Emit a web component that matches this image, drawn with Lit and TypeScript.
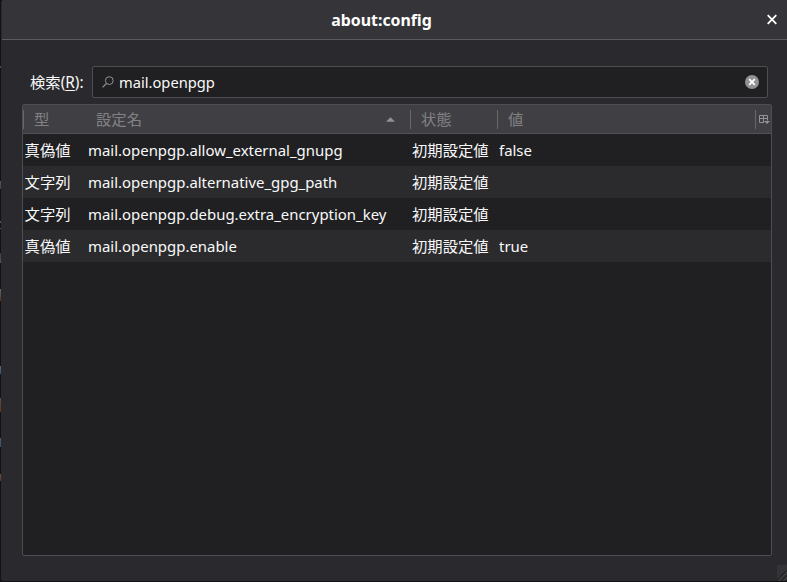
import { LitElement, html, css } from "lit";
import { customElement } from "lit/decorators.js";

interface Pref {
  type: string;
  name: string;
  status: string;
  value: string;
}

const PREFS: Pref[] = [
  { type: "真偽値", name: "mail.openpgp.allow_external_gnupg", status: "初期設定値", value: "false" },
  { type: "文字列", name: "mail.openpgp.alternative_gpg_path", status: "初期設定値", value: "" },
  { type: "文字列", name: "mail.openpgp.debug.extra_encryption_key", status: "初期設定値", value: "" },
  { type: "真偽値", name: "mail.openpgp.enable", status: "初期設定値", value: "true" },
];

@customElement("pref-tree")
export class PrefTree extends LitElement {
  static styles = css`
    :host {
      display: flex;
      flex-direction: column;
      box-sizing: border-box;
      border: 1px solid #4e4e51;
      border-radius: 2px;
      background: #202022;
    }
    .head, .row {
      display: grid;
      grid-template-columns: 65px 322px 87px 1fr 16px;
    }
    .head {
      height: 28px;
      align-items: center;
      background: #404044;
      border-bottom: 1px solid #525255;
      color: #828285;
    }
    .col {
      display: flex;
      align-items: center;
      box-sizing: border-box;
      height: 19px;
      padding-left: 10px;
      line-height: 19px;
      border-left: 1px solid #68686b;
    }
    .name-col {
      border-left: 0;
      padding-left: 8px;
      justify-content: space-between;
      padding-right: 15px;
    }
    .picker { padding-left: 3px; }
    .row {
      height: 32px;
      line-height: 32px;
      color: #f9f9fa;
      white-space: nowrap;
    }
    .row:nth-child(odd) { background: #2b2b2d; }
    .cell { padding-left: 2px; }
    .type { padding-left: 1.6px; }
    .name { padding-left: 0; }
    .latin { display: block; margin-top: -0.5px; font-size: 14.93px; }
    svg { display: block; flex: none; }
  `;

  render() {
    return html`
      <div class="head">
        <div class="col">型</div>
        <div class="col name-col">
          設定名
          <svg width="9" height="5" viewBox="0 0 9 5"><path d="M0 4.8 4.5 .3 9 4.8z" fill="#929295" /></svg>
        </div>
        <div class="col">状態</div>
        <div class="col">値</div>
        <div class="col picker">
          <svg width="11" height="11" viewBox="0 0 11 11">
            <path d="M5 8.5H.5v-7h8v5M0 4.5h9M4.5 1v7.5" fill="none" stroke="#929295" />
            <path d="M5 7h6L8 10z" fill="#929295" />
          </svg>
        </div>
      </div>
      ${PREFS.map(
        (p) => html`
          <div class="row">
            <div class="cell type">${p.type}</div>
            <div class="cell name"><span class="latin">${p.name}</span></div>
            <div class="cell">${p.status}</div>
            <div class="cell"><span class="latin">${p.value}</span></div>
          </div>
        `
      )}
    `;
  }
}

@customElement("app-root")
export class AppRoot extends LitElement {
  static styles = css`
    :host {
      display: flex;
      flex-direction: column;
      box-sizing: border-box;
      width: 787px;
      height: 582px;
      padding: 0 0 1px 1px;
      background:
        linear-gradient(#34566b, #5a4a3a) 0 66px / 1px 2px no-repeat,
        linear-gradient(#55555a, #3b4a58) 0 181px / 1px 8px no-repeat,
        linear-gradient(#55555a, #55555a) 0 221px / 1px 2px no-repeat,
        linear-gradient(#55555a, #55555a) 0 228px / 1px 1px no-repeat,
        linear-gradient(#4a3a2c, #55555a) 0 253px / 1px 10px no-repeat,
        linear-gradient(#66666a, #5a3218) 0 289px / 1px 12px no-repeat,
        linear-gradient(#66666a, #2c567c) 0 366px / 1px 8px no-repeat,
        linear-gradient(#5c4c44, #6a3614) 0 398px / 1px 14px no-repeat,
        linear-gradient(#55555a, #2c567c) 0 438px / 1px 9px no-repeat,
        linear-gradient(#55555a, #6a3614) 0 474px / 1px 7px no-repeat,
        #121215;
      color: #f9f9fa;
      font: 15.33px "Noto Sans", "Noto Sans CJK JP", sans-serif;
      overflow: hidden;
    }
    .window {
      position: relative;
      flex: 1;
      display: flex;
      flex-direction: column;
      background: #2a2a2e;
      border-radius: 3px 0 2px 2px;
      overflow: hidden;
    }
    .titlebar {
      display: grid;
      grid-template-columns: 1fr auto 1fr;
      align-items: center;
      height: 39px;
      padding: 0 10px 0 1px;
      margin-left: 1px;
      background: #353539;
      border-bottom: 1px solid #5b5b5e;
    }
    .title {
      grid-column: 2;
      margin-left: -17px;
      font-size: 15.9px;
      font-weight: 700;
      color: #fff;
    }
    .close { justify-self: end; }
    .body {
      flex: 1;
      display: flex;
      flex-direction: column;
      gap: 6px;
      padding: 26px 15px 25px 21px;
    }
    .search {
      display: flex;
      align-items: center;
      height: 32px;
      margin: 0 4px 0 8px;
    }
    .label { width: 62px; line-height: 20px; padding-bottom: 1px; white-space: nowrap; }
    .key { text-decoration: underline; text-underline-offset: 2px; }
    .box {
      flex: 1;
      display: flex;
      align-items: center;
      box-sizing: border-box;
      height: 32px;
      padding: 0 8px 0 9px;
      border: 1px solid #4e4e51;
      border-radius: 2px;
      background: #202022;
    }
    .query { flex: 1; padding-left: 5px; font-size: 14.7px; }
    svg { display: block; }
    pref-tree { flex: 1; }
    .grip { position: absolute; right: 0; bottom: 0; }
  `;

  render() {
    return html`
      <div class="window">
        <div class="titlebar">
          <div class="title">about:config</div>
          <svg class="close" width="10" height="11" viewBox="0 0 10 11">
            <path d="M.7 1.2l8.6 8.6M9.3 1.2.7 9.8" stroke="#fff" stroke-width="1.8" />
          </svg>
        </div>
        <div class="body">
          <div class="search">
            <div class="label">検索(<span class="key">R</span>):</div>
            <div class="box">
              <svg width="12" height="12" viewBox="0 0 12 12">
                <circle cx="7.3" cy="4.6" r="3.9" fill="none" stroke="#929294" />
                <path d="M4.4 7.5.6 11.3" stroke="#929294" stroke-width="1.2" />
              </svg>
              <span class="query">mail.openpgp</span>
              <svg width="14" height="14" viewBox="0 0 14 14">
                <circle cx="7" cy="7" r="7" fill="#929294" />
                <path d="M4.2 4.2l5.6 5.6M9.8 4.2 4.2 9.8" stroke="#fff" stroke-width="1.8" />
              </svg>
            </div>
          </div>
          <pref-tree></pref-tree>
        </div>
        <svg class="grip" width="10" height="16" viewBox="0 0 10 16">
          <path d="M0 0h10v16H0z" fill="#343436" />
          <path d="M0 15.5 10 5.5M5 15.5l5-5" stroke="#202023" stroke-width="1.2" />
          <path d="M1.5 15.5l8.5-8.5M6.5 15.5l3.5-3.5" stroke="#48484a" />
        </svg>
      </div>
    `;
  }
}
